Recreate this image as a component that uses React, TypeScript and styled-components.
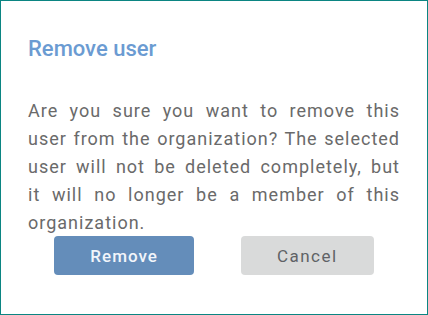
import React from "react";
import styled, { createGlobalStyle } from "styled-components";

const Global = createGlobalStyle`
  html, body { margin: 0; padding: 0; background: #ffffff; }
  * { box-sizing: border-box; }
`;

const Dialog = styled.div`
  width: 428px;
  height: 315px;
  border: 1px solid #0b8582;
  background: #ffffff;
  padding: 35px 27px 0 27px;
  font-family: Roboto, "Liberation Sans", sans-serif;
  display: flex;
  flex-direction: column;
`;

const Title = styled.h2`
  margin: 0;
  font-size: 22px;
  font-weight: 500;
  line-height: 26px;
  color: #6b9bd2;
`;

const Message = styled.p`
  margin: 35px 0 0 0;
  font-size: 18px;
  line-height: 28px;
  letter-spacing: 1px;
  word-spacing: 0.8px;
  color: #6a6a6a;
  text-align: justify;
`;

const Actions = styled.div`
  display: flex;
  justify-content: center;
  gap: 47px;
  margin-top: -1px;
`;

const Button = styled.button<{ $primary?: boolean }>`
  height: 39px;
  padding: 0 36px;
  border: none;
  border-radius: 4px;
  font-family: Roboto, "Liberation Sans", sans-serif;
  font-size: 17px;
  font-weight: ${(p) => (p.$primary ? 500 : 400)};
  letter-spacing: ${(p) => (p.$primary ? "1px" : "1.5px")};
  background: ${(p) => (p.$primary ? "#648dba" : "#d9dada")};
  color: ${(p) => (p.$primary ? "#f2f5fa" : "#5f6266")};
  cursor: pointer;
`;

export default function App() {
  return (
    <>
      <Global />
      <Dialog>
        <Title>Remove user</Title>
        <Message>
          Are you sure you want to remove this user from the organization? The
          selected user will not be deleted completely, but it will no longer be
          a member of this organization.
        </Message>
        <Actions>
          <Button $primary>Remove</Button>
          <Button>Cancel</Button>
        </Actions>
      </Dialog>
    </>
  );
}
